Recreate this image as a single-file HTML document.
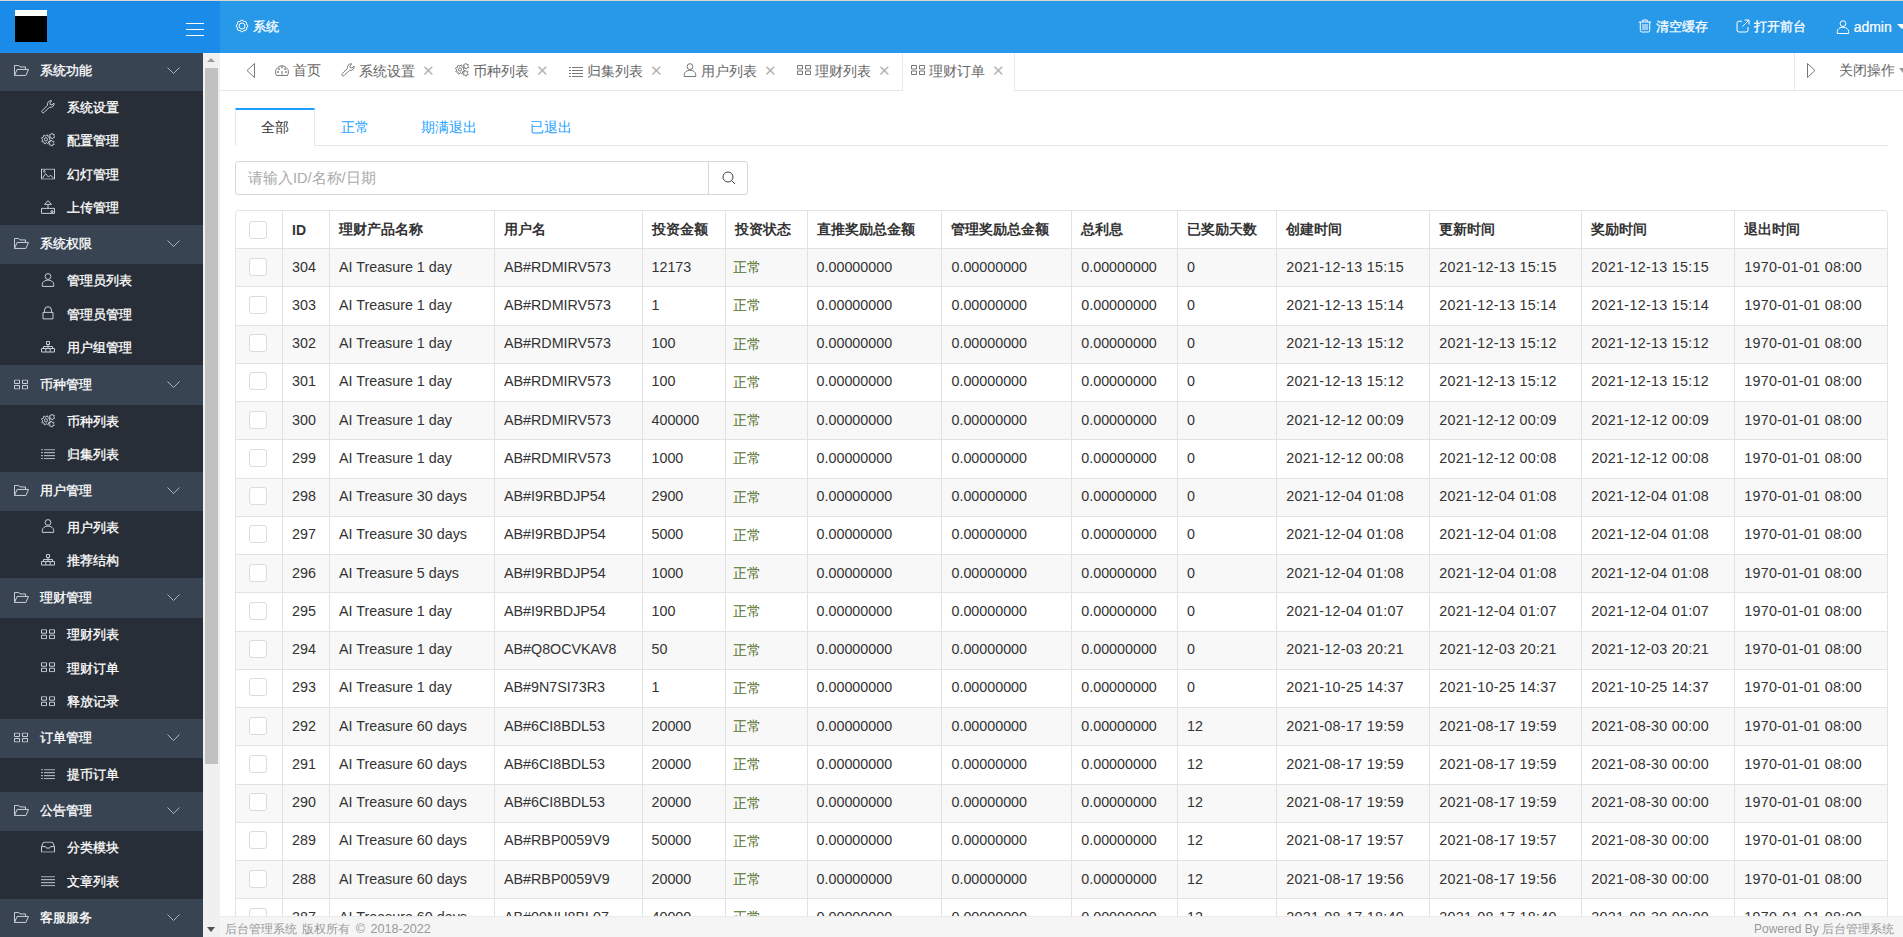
<!DOCTYPE html>
<html><head><meta charset="utf-8">
<style>
*{box-sizing:border-box;margin:0;padding:0}
html,body{width:1903px;height:937px;overflow:hidden;background:#fff;font-family:"Liberation Sans",sans-serif;color:#333}
.abs{position:absolute}
#topline{position:absolute;left:0;top:0;width:1903px;height:1px;background:#d9d6d2}
#logo{z-index:5;position:absolute;left:0;top:1px;width:220px;height:52px;background:#1a8be9}
#logo .box{position:absolute;left:15px;top:9px;width:32px;height:32px;background:#000;border-top:6px solid #fff}
#hamb{position:absolute;left:186px;top:22px;width:18px}
#hamb i{display:block;height:1px;background:#fff;margin-bottom:5px}
#hdr{z-index:5;position:absolute;left:220px;top:1px;width:1683px;height:52px;background:#2898e9;color:#fff;font-size:13px;-webkit-text-stroke:0.3px #fff}
#hdr svg{-webkit-text-stroke:0}
#hdr .t{position:absolute;top:17px;line-height:18px;white-space:nowrap}
#hdr svg{vertical-align:-2px}
#side{position:absolute;left:0;top:53px;width:203px;height:884px;background:#282e37}
.gh{position:absolute;left:0;width:203px;background:#394453;color:#fff;font-size:13px;-webkit-text-stroke:0.3px #fff}
.gh .gi{position:absolute;left:14px;top:50%;transform:translateY(-55%);color:#c9ced6;line-height:0}
.gh .gt{position:absolute;left:40px;top:50%;margin-top:-10px;line-height:20px}
.gh .gc{position:absolute;left:167px;top:50%;margin-top:-4px;color:#aeb4bd;line-height:0}
.it{position:absolute;left:0;width:203px;color:#fff;font-size:13px;-webkit-text-stroke:0.3px #fff}
.it .ii{position:absolute;left:40.8px;top:50%;transform:translateY(-58%);color:#c9ced6;line-height:0}
.it .itx{position:absolute;left:67px;top:0}
#sb{position:absolute;left:203px;top:53px;width:17px;height:884px;background:#f0f0f0}
#sb .th{position:absolute;left:2px;top:15px;width:13px;height:696px;background:#c1c1c1}
#sb .up{position:absolute;left:4px;top:4.5px;width:0;height:0;border-left:4px solid transparent;border-right:4px solid transparent;border-bottom:4.5px solid #9f9a9a}
#sb .dn{position:absolute;left:4px;top:874px;width:0;height:0;border-left:4.5px solid transparent;border-right:4.5px solid transparent;border-top:5px solid #505050}
#tabbar{position:absolute;left:220px;top:53px;width:1683px;height:38px;background:#fff;border-bottom:1px solid #e8e8e8;font-size:14px;color:#666}
.tb{position:absolute;top:0;height:36px;line-height:35px;white-space:nowrap}
.tb svg{vertical-align:-1px;color:#777}
.tb .gi2 svg{vertical-align:1px}
.tb .x{color:#b5b5b5;font-size:15px;margin-left:7px}
#content{position:absolute;left:220px;top:91px;width:1683px;height:825px;background:#fff;overflow:hidden}
#footer{position:absolute;left:220px;top:916px;width:1683px;height:21px;background:#f5f5f5;border-top:1px solid #eaeaea;color:#999;font-size:12px;line-height:20px}
table.dt{position:absolute;left:15px;top:119px;border-collapse:collapse;table-layout:fixed;width:1652px;font-size:14.3px;color:#333}
table.dt td, table.dt th{border:1px solid #e2e2e2;padding:0 0 0 9px;height:38.25px;white-space:nowrap;overflow:hidden;text-align:left}
table.dt th{font-weight:bold;height:38px;font-size:14px;padding-bottom:0}
table.dt td{padding-bottom:2px}
table.dt td.d{letter-spacing:0.3px}
table.dt tr.g td{background:#f8f8f8}
.cbx{display:inline-block;width:18px;height:18px;border:1px solid #dcdcdc;border-radius:3px;background:#fff;vertical-align:middle;margin-left:4px}
.ok{color:#53702c;position:relative;top:1.5px;left:-1.5px;font-size:14px}
</style></head><body>
<div id="topline"></div>
<div id="logo"><div class="box"></div><div id="hamb"><i></i><i></i><i></i></div></div>
<div id="hdr">
  <div class="t" style="left:15px;letter-spacing:0"><svg width="14" height="14" viewBox="0 0 14 14" fill="none" stroke="currentColor" stroke-width="1"><path d="M11.25 8.76A1.77 1.77 0 0 1 8.76 11.25A1.77 1.77 0 0 1 5.24 11.25A1.77 1.77 0 0 1 2.75 8.76A1.77 1.77 0 0 1 2.75 5.24A1.77 1.77 0 0 1 5.24 2.75A1.77 1.77 0 0 1 8.76 2.75A1.77 1.77 0 0 1 11.25 5.24A1.77 1.77 0 0 1 11.25 8.76Z"/><circle cx="7" cy="7" r="3"/></svg> 系统</div>
  <div class="t" style="left:1418px"><svg width="14" height="14" viewBox="0 0 14 14" fill="none" stroke="currentColor" stroke-width="1"><path d="M0.8 3h12.4M4.8 3V1h4.4v2M2.3 3v8.5a1.5 1.5 0 0 0 1.5 1.5h6.4a1.5 1.5 0 0 0 1.5-1.5V3M5 5v6M7 5v6M9 5v6"/></svg> 清空缓存</div>
  <div class="t" style="left:1516px"><svg width="14" height="14" viewBox="0 0 14 14" fill="none" stroke="currentColor" stroke-width="1"><path d="M6 2.2H3a2 2 0 0 0-2 2V11a2 2 0 0 0 2 2h7a2 2 0 0 0 2-2V8"/><path d="M8.5 1h4.5v4.5M13 1L6.5 7.5"/></svg> 打开前台</div>
  <div class="t" style="left:1616px"><svg width="14" height="14" viewBox="0 0 14 14" fill="none" stroke="currentColor" stroke-width="1"><circle cx="7" cy="3.6" r="2.9"/><path d="M1.3 13.5v-2c0-2.4 2.6-4.3 5.7-4.3s5.7 1.9 5.7 4.3v2z"/></svg> <span style="font-size:14px;-webkit-text-stroke:0.2px #fff">admin</span></div><div class="abs" style="left:1677px;top:23px;width:0;height:0;border-left:5px solid transparent;border-right:5px solid transparent;border-top:5px solid #fff"></div>
</div>
<div id="side">
</div>
<div id="sidewrap" style="position:absolute;left:0;top:0"><div class="gh" style="top:51.5px;height:39.5px"><span class="gi"><svg width="15" height="11" viewBox="0 0 15 11" fill="none" stroke="currentColor" stroke-width="1"><path d="M0.5 10.5V0.5h4.2l1.3 1.5h5.5v2.5"/><path d="M0.5 10.5l2.6-6h11.4l-2.6 6z"/></svg></span><span class="gt">系统功能</span><span class="gc"><svg width="13" height="7" viewBox="0 0 13 7" fill="none" stroke="currentColor" stroke-width="1"><path d="M0.5 0.5l6 6 6-6"/></svg></span></div>
<div class="it" style="top:91.00px;height:33.42px;line-height:33.42px"><span class="ii"><svg width="14" height="14" viewBox="0 0 14 14" fill="none" stroke="currentColor" stroke-width="1"><path d="M13 3.2a3.5 3.5 0 0 1-4.6 4.1L3.1 12.6a1.3 1.3 0 0 1-1.8 0l-0.1-0.1a1.3 1.3 0 0 1 0-1.8l5.3-5.3A3.5 3.5 0 0 1 10.8 1L8.9 2.9l0.3 1.8 1.8 0.3z"/></svg></span><span class="itx">系统设置</span></div>
<div class="it" style="top:124.42px;height:33.42px;line-height:33.42px"><span class="ii"><svg width="14" height="14" viewBox="0 0 14 14" fill="none" stroke="currentColor" stroke-width="1"><path d="M8.40 6.50L9.51 7.40L9.25 8.26L7.83 8.39L7.40 8.90L7.56 10.32L6.76 10.75L5.66 9.83L5.00 9.90L4.10 11.01L3.24 10.75L3.11 9.33L2.60 8.90L1.18 9.06L0.75 8.26L1.67 7.16L1.60 6.50L0.49 5.60L0.75 4.74L2.17 4.61L2.60 4.10L2.44 2.68L3.24 2.25L4.34 3.17L5.00 3.10L5.90 1.99L6.76 2.25L6.89 3.67L7.40 4.10L8.82 3.94L9.25 4.74L8.33 5.84Z"/><circle cx="5" cy="6.5" r="1.6"/><path d="M12.90 3.20L13.70 3.92L13.42 4.60L12.34 4.54L11.95 4.85L11.72 5.90L11.00 6.00L10.51 5.04L10.05 4.85L9.02 5.18L8.58 4.60L9.16 3.69L9.10 3.20L8.30 2.48L8.58 1.80L9.66 1.86L10.05 1.55L10.28 0.50L11.00 0.40L11.49 1.36L11.95 1.55L12.98 1.22L13.42 1.80L12.84 2.71Z"/><path d="M12.50 10.30L13.30 11.02L13.02 11.70L11.94 11.64L11.55 11.95L11.32 13.00L10.60 13.10L10.11 12.14L9.65 11.95L8.62 12.28L8.18 11.70L8.76 10.79L8.70 10.30L7.90 9.58L8.18 8.90L9.26 8.96L9.65 8.65L9.88 7.60L10.60 7.50L11.09 8.46L11.55 8.65L12.58 8.32L13.02 8.90L12.44 9.81Z"/></svg></span><span class="itx">配置管理</span></div>
<div class="it" style="top:157.85px;height:33.42px;line-height:33.42px"><span class="ii"><svg width="14" height="11" viewBox="0 0 14 11" fill="none" stroke="currentColor" stroke-width="1"><rect x="0.5" y="0.5" width="13" height="10"/><path d="M1.5 9.5l3-4.5 3 3.5 2-2 3 3"/><circle cx="3.3" cy="2.8" r="0.9"/></svg></span><span class="itx">幻灯管理</span></div>
<div class="it" style="top:191.27px;height:33.42px;line-height:33.42px"><span class="ii"><svg width="14" height="14" viewBox="0 0 14 14" fill="none" stroke="currentColor" stroke-width="1"><path d="M7 0.8L3.6 4.5h6.8z"/><path d="M7 4.5v4"/><path d="M0.5 8.5h13v5h-13z"/><path d="M10 11h2v1.5h-2z"/></svg></span><span class="itx">上传管理</span></div>
<div class="gh" style="top:224.7px;height:39.30000000000001px"><span class="gi"><svg width="15" height="11" viewBox="0 0 15 11" fill="none" stroke="currentColor" stroke-width="1"><path d="M0.5 10.5V0.5h4.2l1.3 1.5h5.5v2.5"/><path d="M0.5 10.5l2.6-6h11.4l-2.6 6z"/></svg></span><span class="gt">系统权限</span><span class="gc"><svg width="13" height="7" viewBox="0 0 13 7" fill="none" stroke="currentColor" stroke-width="1"><path d="M0.5 0.5l6 6 6-6"/></svg></span></div>
<div class="it" style="top:264.00px;height:33.63px;line-height:33.63px"><span class="ii"><svg width="14" height="14" viewBox="0 0 14 14" fill="none" stroke="currentColor" stroke-width="1"><circle cx="7" cy="3.6" r="2.9"/><path d="M1.3 13.5v-2c0-2.4 2.6-4.3 5.7-4.3s5.7 1.9 5.7 4.3v2z"/></svg></span><span class="itx">管理员列表</span></div>
<div class="it" style="top:297.63px;height:33.63px;line-height:33.63px"><span class="ii"><svg width="14" height="14" viewBox="0 0 14 14" fill="none" stroke="currentColor" stroke-width="1"><path d="M2 6.5h10v6.5H2z"/><path d="M3.5 6.5V4.3a3.5 3.5 0 0 1 7 0v2.2"/></svg></span><span class="itx">管理员管理</span></div>
<div class="it" style="top:331.27px;height:33.63px;line-height:33.63px"><span class="ii"><svg width="14" height="12" viewBox="0 0 14 12" fill="none" stroke="currentColor" stroke-width="1"><path d="M5.5 0.5h3v3h-3z"/><path d="M7 3.5v2M2.5 7.5v-2h9v2M7 5.5v2"/><path d="M0.5 7.5h13v3.5h-13zM4.8 7.5v3.5M9.2 7.5v3.5"/></svg></span><span class="itx">用户组管理</span></div>
<div class="gh" style="top:364.9px;height:40.0px"><span class="gi"><svg width="14" height="10" viewBox="0 0 14 10" fill="none" stroke="currentColor" stroke-width="1"><path d="M0.5 0.5h5v3.5h-5zM8.5 0.5h5v3.5h-5zM0.5 6h5v3.5h-5zM8.5 6h5v3.5h-5z"/></svg></span><span class="gt">币种管理</span><span class="gc"><svg width="13" height="7" viewBox="0 0 13 7" fill="none" stroke="currentColor" stroke-width="1"><path d="M0.5 0.5l6 6 6-6"/></svg></span></div>
<div class="it" style="top:404.90px;height:33.55px;line-height:33.55px"><span class="ii"><svg width="14" height="14" viewBox="0 0 14 14" fill="none" stroke="currentColor" stroke-width="1"><path d="M8.40 6.50L9.51 7.40L9.25 8.26L7.83 8.39L7.40 8.90L7.56 10.32L6.76 10.75L5.66 9.83L5.00 9.90L4.10 11.01L3.24 10.75L3.11 9.33L2.60 8.90L1.18 9.06L0.75 8.26L1.67 7.16L1.60 6.50L0.49 5.60L0.75 4.74L2.17 4.61L2.60 4.10L2.44 2.68L3.24 2.25L4.34 3.17L5.00 3.10L5.90 1.99L6.76 2.25L6.89 3.67L7.40 4.10L8.82 3.94L9.25 4.74L8.33 5.84Z"/><circle cx="5" cy="6.5" r="1.6"/><path d="M12.90 3.20L13.70 3.92L13.42 4.60L12.34 4.54L11.95 4.85L11.72 5.90L11.00 6.00L10.51 5.04L10.05 4.85L9.02 5.18L8.58 4.60L9.16 3.69L9.10 3.20L8.30 2.48L8.58 1.80L9.66 1.86L10.05 1.55L10.28 0.50L11.00 0.40L11.49 1.36L11.95 1.55L12.98 1.22L13.42 1.80L12.84 2.71Z"/><path d="M12.50 10.30L13.30 11.02L13.02 11.70L11.94 11.64L11.55 11.95L11.32 13.00L10.60 13.10L10.11 12.14L9.65 11.95L8.62 12.28L8.18 11.70L8.76 10.79L8.70 10.30L7.90 9.58L8.18 8.90L9.26 8.96L9.65 8.65L9.88 7.60L10.60 7.50L11.09 8.46L11.55 8.65L12.58 8.32L13.02 8.90L12.44 9.81Z"/></svg></span><span class="itx">币种列表</span></div>
<div class="it" style="top:438.45px;height:33.55px;line-height:33.55px"><span class="ii"><svg width="14" height="10" viewBox="0 0 14 10" fill="none" stroke="currentColor" stroke-width="1"><path d="M0 0.5h2M3 0.5h11M0 3.5h2M3 3.5h11M0 6.5h2M3 6.5h11M0 9.5h2M3 9.5h11"/></svg></span><span class="itx">归集列表</span></div>
<div class="gh" style="top:472px;height:38.69999999999999px"><span class="gi"><svg width="15" height="11" viewBox="0 0 15 11" fill="none" stroke="currentColor" stroke-width="1"><path d="M0.5 10.5V0.5h4.2l1.3 1.5h5.5v2.5"/><path d="M0.5 10.5l2.6-6h11.4l-2.6 6z"/></svg></span><span class="gt">用户管理</span><span class="gc"><svg width="13" height="7" viewBox="0 0 13 7" fill="none" stroke="currentColor" stroke-width="1"><path d="M0.5 0.5l6 6 6-6"/></svg></span></div>
<div class="it" style="top:510.70px;height:33.50px;line-height:33.50px"><span class="ii"><svg width="14" height="14" viewBox="0 0 14 14" fill="none" stroke="currentColor" stroke-width="1"><circle cx="7" cy="3.6" r="2.9"/><path d="M1.3 13.5v-2c0-2.4 2.6-4.3 5.7-4.3s5.7 1.9 5.7 4.3v2z"/></svg></span><span class="itx">用户列表</span></div>
<div class="it" style="top:544.20px;height:33.50px;line-height:33.50px"><span class="ii"><svg width="14" height="12" viewBox="0 0 14 12" fill="none" stroke="currentColor" stroke-width="1"><path d="M5.5 0.5h3v3h-3z"/><path d="M7 3.5v2M2.5 7.5v-2h9v2M7 5.5v2"/><path d="M0.5 7.5h13v3.5h-13zM4.8 7.5v3.5M9.2 7.5v3.5"/></svg></span><span class="itx">推荐结构</span></div>
<div class="gh" style="top:577.7px;height:40.09999999999991px"><span class="gi"><svg width="15" height="11" viewBox="0 0 15 11" fill="none" stroke="currentColor" stroke-width="1"><path d="M0.5 10.5V0.5h4.2l1.3 1.5h5.5v2.5"/><path d="M0.5 10.5l2.6-6h11.4l-2.6 6z"/></svg></span><span class="gt">理财管理</span><span class="gc"><svg width="13" height="7" viewBox="0 0 13 7" fill="none" stroke="currentColor" stroke-width="1"><path d="M0.5 0.5l6 6 6-6"/></svg></span></div>
<div class="it" style="top:617.80px;height:33.70px;line-height:33.70px"><span class="ii"><svg width="14" height="10" viewBox="0 0 14 10" fill="none" stroke="currentColor" stroke-width="1"><path d="M0.5 0.5h5v3.5h-5zM8.5 0.5h5v3.5h-5zM0.5 6h5v3.5h-5zM8.5 6h5v3.5h-5z"/></svg></span><span class="itx">理财列表</span></div>
<div class="it" style="top:651.50px;height:33.70px;line-height:33.70px"><span class="ii"><svg width="14" height="10" viewBox="0 0 14 10" fill="none" stroke="currentColor" stroke-width="1"><path d="M0.5 0.5h5v3.5h-5zM8.5 0.5h5v3.5h-5zM0.5 6h5v3.5h-5zM8.5 6h5v3.5h-5z"/></svg></span><span class="itx">理财订单</span></div>
<div class="it" style="top:685.20px;height:33.70px;line-height:33.70px"><span class="ii"><svg width="14" height="10" viewBox="0 0 14 10" fill="none" stroke="currentColor" stroke-width="1"><path d="M0.5 0.5h5v3.5h-5zM8.5 0.5h5v3.5h-5zM0.5 6h5v3.5h-5zM8.5 6h5v3.5h-5z"/></svg></span><span class="itx">释放记录</span></div>
<div class="gh" style="top:718.9px;height:38.89999999999998px"><span class="gi"><svg width="14" height="10" viewBox="0 0 14 10" fill="none" stroke="currentColor" stroke-width="1"><path d="M0.5 0.5h5v3.5h-5zM8.5 0.5h5v3.5h-5zM0.5 6h5v3.5h-5zM8.5 6h5v3.5h-5z"/></svg></span><span class="gt">订单管理</span><span class="gc"><svg width="13" height="7" viewBox="0 0 13 7" fill="none" stroke="currentColor" stroke-width="1"><path d="M0.5 0.5l6 6 6-6"/></svg></span></div>
<div class="it" style="top:757.80px;height:34.20px;line-height:34.20px"><span class="ii"><svg width="14" height="10" viewBox="0 0 14 10" fill="none" stroke="currentColor" stroke-width="1"><path d="M0 0.5h2M3 0.5h11M0 3.5h2M3 3.5h11M0 6.5h2M3 6.5h11M0 9.5h2M3 9.5h11"/></svg></span><span class="itx">提币订单</span></div>
<div class="gh" style="top:792px;height:38.89999999999998px"><span class="gi"><svg width="15" height="11" viewBox="0 0 15 11" fill="none" stroke="currentColor" stroke-width="1"><path d="M0.5 10.5V0.5h4.2l1.3 1.5h5.5v2.5"/><path d="M0.5 10.5l2.6-6h11.4l-2.6 6z"/></svg></span><span class="gt">公告管理</span><span class="gc"><svg width="13" height="7" viewBox="0 0 13 7" fill="none" stroke="currentColor" stroke-width="1"><path d="M0.5 0.5l6 6 6-6"/></svg></span></div>
<div class="it" style="top:830.90px;height:33.85px;line-height:33.85px"><span class="ii"><svg width="14" height="11" viewBox="0 0 14 11" fill="none" stroke="currentColor" stroke-width="1"><path d="M2.5 0.5h9l2 4.5v5.5H0.5V5z"/><path d="M0.5 5h4l1 1.5h3l1-1.5h4"/></svg></span><span class="itx">分类模块</span></div>
<div class="it" style="top:864.75px;height:33.85px;line-height:33.85px"><span class="ii"><svg width="14" height="10" viewBox="0 0 14 10" fill="none" stroke="currentColor" stroke-width="1"><path d="M0 0.5h14M0 3.5h14M0 6.5h14M0 9.5h14"/></svg></span><span class="itx">文章列表</span></div>
<div class="gh" style="top:898.6px;height:39.0px"><span class="gi"><svg width="15" height="11" viewBox="0 0 15 11" fill="none" stroke="currentColor" stroke-width="1"><path d="M0.5 10.5V0.5h4.2l1.3 1.5h5.5v2.5"/><path d="M0.5 10.5l2.6-6h11.4l-2.6 6z"/></svg></span><span class="gt">客服服务</span><span class="gc"><svg width="13" height="7" viewBox="0 0 13 7" fill="none" stroke="currentColor" stroke-width="1"><path d="M0.5 0.5l6 6 6-6"/></svg></span></div></div>
<div id="sb"><div class="up"></div><div class="th"></div><div class="dn"></div></div>
<div id="tabbar">
  <div class="tb" style="left:26px;top:2px;color:#888"><svg width="10" height="15" viewBox="0 0 10 15" fill="none" stroke="currentColor" stroke-width="1"><path d="M8.5 0.5L1 7.5 8.5 14.5z"/></svg></div>
  <div class="tb" style="left:55px"><svg width="14" height="12" viewBox="0 0 14 12" fill="none" stroke="currentColor" stroke-width="1"><path d="M1.6 11.5A6.3 6.3 0 1 1 12.4 11.5Z"/><path d="M7 10.5V7"/><circle cx="7" cy="3.3" r="0.6"/><circle cx="4" cy="5" r="0.6"/><circle cx="10" cy="5" r="0.6"/><circle cx="3" cy="8" r="0.6"/><circle cx="11" cy="8" r="0.6"/></svg> 首页</div>
  <div class="tb" style="left:121px"><svg width="14" height="14" viewBox="0 0 14 14" fill="none" stroke="currentColor" stroke-width="1"><path d="M13 3.2a3.5 3.5 0 0 1-4.6 4.1L3.1 12.6a1.3 1.3 0 0 1-1.8 0l-0.1-0.1a1.3 1.3 0 0 1 0-1.8l5.3-5.3A3.5 3.5 0 0 1 10.8 1L8.9 2.9l0.3 1.8 1.8 0.3z"/></svg> 系统设置<span class="x">✕</span></div>
  <div class="tb" style="left:235px"><svg width="14" height="14" viewBox="0 0 14 14" fill="none" stroke="currentColor" stroke-width="1"><path d="M8.40 6.50L9.51 7.40L9.25 8.26L7.83 8.39L7.40 8.90L7.56 10.32L6.76 10.75L5.66 9.83L5.00 9.90L4.10 11.01L3.24 10.75L3.11 9.33L2.60 8.90L1.18 9.06L0.75 8.26L1.67 7.16L1.60 6.50L0.49 5.60L0.75 4.74L2.17 4.61L2.60 4.10L2.44 2.68L3.24 2.25L4.34 3.17L5.00 3.10L5.90 1.99L6.76 2.25L6.89 3.67L7.40 4.10L8.82 3.94L9.25 4.74L8.33 5.84Z"/><circle cx="5" cy="6.5" r="1.6"/><path d="M12.90 3.20L13.70 3.92L13.42 4.60L12.34 4.54L11.95 4.85L11.72 5.90L11.00 6.00L10.51 5.04L10.05 4.85L9.02 5.18L8.58 4.60L9.16 3.69L9.10 3.20L8.30 2.48L8.58 1.80L9.66 1.86L10.05 1.55L10.28 0.50L11.00 0.40L11.49 1.36L11.95 1.55L12.98 1.22L13.42 1.80L12.84 2.71Z"/><path d="M12.50 10.30L13.30 11.02L13.02 11.70L11.94 11.64L11.55 11.95L11.32 13.00L10.60 13.10L10.11 12.14L9.65 11.95L8.62 12.28L8.18 11.70L8.76 10.79L8.70 10.30L7.90 9.58L8.18 8.90L9.26 8.96L9.65 8.65L9.88 7.60L10.60 7.50L11.09 8.46L11.55 8.65L12.58 8.32L13.02 8.90L12.44 9.81Z"/></svg> 币种列表<span class="x">✕</span></div>
  <div class="tb" style="left:349px"><svg width="14" height="10" viewBox="0 0 14 10" fill="none" stroke="currentColor" stroke-width="1"><path d="M0 0.5h2M3 0.5h11M0 3.5h2M3 3.5h11M0 6.5h2M3 6.5h11M0 9.5h2M3 9.5h11"/></svg> 归集列表<span class="x">✕</span></div>
  <div class="tb" style="left:463px"><svg width="14" height="14" viewBox="0 0 14 14" fill="none" stroke="currentColor" stroke-width="1"><circle cx="7" cy="3.6" r="2.9"/><path d="M1.3 13.5v-2c0-2.4 2.6-4.3 5.7-4.3s5.7 1.9 5.7 4.3v2z"/></svg> 用户列表<span class="x">✕</span></div>
  <div class="tb" style="left:577px"><span class=gi2><svg width="14" height="10" viewBox="0 0 14 10" fill="none" stroke="currentColor" stroke-width="1"><path d="M0.5 0.5h5v3.5h-5zM8.5 0.5h5v3.5h-5zM0.5 6h5v3.5h-5zM8.5 6h5v3.5h-5z"/></svg></span> 理财列表<span class="x">✕</span></div>
  <div class="tb" style="left:691px"><span class=gi2><svg width="14" height="10" viewBox="0 0 14 10" fill="none" stroke="currentColor" stroke-width="1"><path d="M0.5 0.5h5v3.5h-5zM8.5 0.5h5v3.5h-5zM0.5 6h5v3.5h-5zM8.5 6h5v3.5h-5z"/></svg></span> 理财订单<span class="x">✕</span></div>
  <div class="abs" style="left:682px;top:0;width:113px;height:38px;border-left:1px solid #e8e8e8;border-right:1px solid #e8e8e8;background:#fff"></div>
  <div class="tb" style="left:691px"><span class=gi2><svg width="14" height="10" viewBox="0 0 14 10" fill="none" stroke="currentColor" stroke-width="1"><path d="M0.5 0.5h5v3.5h-5zM8.5 0.5h5v3.5h-5zM0.5 6h5v3.5h-5zM8.5 6h5v3.5h-5z"/></svg></span> 理财订单<span class="x">✕</span></div>
  <div class="abs" style="left:1574px;top:0;width:1px;height:37px;background:#e8e8e8"></div>
  <div class="tb" style="left:1586px;top:2px;color:#888"><svg width="10" height="15" viewBox="0 0 10 15" fill="none" stroke="currentColor" stroke-width="1"><path d="M1.5 0.5L9 7.5 1.5 14.5z"/></svg></div>
  <div class="tb" style="left:1619px">关闭操作 <span style="display:inline-block;border-left:4px solid transparent;border-right:4px solid transparent;border-top:5px solid #999;vertical-align:2px"></span></div>
</div>
<div id="content">
  <div class="abs" style="left:15px;top:54px;width:1653px;height:1px;background:#e6e6e6"></div>
  <div class="abs" style="left:15px;top:17px;width:80px;height:38px;border:1px solid #e6e6e6;border-top:2px solid #1e9fff;border-bottom:none;background:#fff;text-align:center;line-height:35px;font-size:14px;color:#333">全部</div>
  <div class="abs" style="left:121px;top:18px;line-height:36px;font-size:14px;color:#1e9fff">正常</div>
  <div class="abs" style="left:201px;top:18px;line-height:36px;font-size:14px;color:#1e9fff">期满退出</div>
  <div class="abs" style="left:310px;top:18px;line-height:36px;font-size:14px;color:#1e9fff">已退出</div>
  <div class="abs" style="left:15px;top:70px;width:513px;height:34px;border:1px solid #d6d6d6;border-radius:3px"></div>
  <div class="abs" style="left:488px;top:70px;width:1px;height:34px;background:#d6d6d6"></div>
  <div class="abs" style="left:28px;top:78px;line-height:18px;font-size:14.5px;color:#aaa">请输入ID/名称/日期</div>
  <div class="abs" style="left:501.5px;top:80px;line-height:0"><svg width="15" height="15" viewBox="0 0 15 15" fill="none" stroke="#444" stroke-width="1"><circle cx="6" cy="6" r="5"/><path d="M9.6 9.6l3.4 3.4"/></svg></div>
  <table class="dt"><colgroup><col style="width:47.0px"><col style="width:47.0px"><col style="width:165.0px"><col style="width:147.5px"><col style="width:83.0px"><col style="width:82.1px"><col style="width:134.9px"><col style="width:129.8px"><col style="width:105.7px"><col style="width:99.3px"><col style="width:152.9px"><col style="width:152.2px"><col style="width:152.9px"><col style="width:152.7px"></colgroup><tr class="hr"><th><i class=cbx></i></th><th>ID</th><th>理财产品名称</th><th>用户名</th><th>投资金额</th><th>投资状态</th><th>直推奖励总金额</th><th>管理奖励总金额</th><th>总利息</th><th>已奖励天数</th><th>创建时间</th><th>更新时间</th><th>奖励时间</th><th>退出时间</th></tr><tr class="g"><td><i class="cbx"></i></td><td>304</td><td>AI Treasure 1 day</td><td>AB#RDMIRV573</td><td>12173</td><td><span class="ok">正常</span></td><td>0.00000000</td><td>0.00000000</td><td>0.00000000</td><td>0</td><td class=d>2021-12-13 15:15</td><td class=d>2021-12-13 15:15</td><td class=d>2021-12-13 15:15</td><td class=d>1970-01-01 08:00</td></tr><tr class="w"><td><i class="cbx"></i></td><td>303</td><td>AI Treasure 1 day</td><td>AB#RDMIRV573</td><td>1</td><td><span class="ok">正常</span></td><td>0.00000000</td><td>0.00000000</td><td>0.00000000</td><td>0</td><td class=d>2021-12-13 15:14</td><td class=d>2021-12-13 15:14</td><td class=d>2021-12-13 15:14</td><td class=d>1970-01-01 08:00</td></tr><tr class="g"><td><i class="cbx"></i></td><td>302</td><td>AI Treasure 1 day</td><td>AB#RDMIRV573</td><td>100</td><td><span class="ok">正常</span></td><td>0.00000000</td><td>0.00000000</td><td>0.00000000</td><td>0</td><td class=d>2021-12-13 15:12</td><td class=d>2021-12-13 15:12</td><td class=d>2021-12-13 15:12</td><td class=d>1970-01-01 08:00</td></tr><tr class="w"><td><i class="cbx"></i></td><td>301</td><td>AI Treasure 1 day</td><td>AB#RDMIRV573</td><td>100</td><td><span class="ok">正常</span></td><td>0.00000000</td><td>0.00000000</td><td>0.00000000</td><td>0</td><td class=d>2021-12-13 15:12</td><td class=d>2021-12-13 15:12</td><td class=d>2021-12-13 15:12</td><td class=d>1970-01-01 08:00</td></tr><tr class="g"><td><i class="cbx"></i></td><td>300</td><td>AI Treasure 1 day</td><td>AB#RDMIRV573</td><td>400000</td><td><span class="ok">正常</span></td><td>0.00000000</td><td>0.00000000</td><td>0.00000000</td><td>0</td><td class=d>2021-12-12 00:09</td><td class=d>2021-12-12 00:09</td><td class=d>2021-12-12 00:09</td><td class=d>1970-01-01 08:00</td></tr><tr class="w"><td><i class="cbx"></i></td><td>299</td><td>AI Treasure 1 day</td><td>AB#RDMIRV573</td><td>1000</td><td><span class="ok">正常</span></td><td>0.00000000</td><td>0.00000000</td><td>0.00000000</td><td>0</td><td class=d>2021-12-12 00:08</td><td class=d>2021-12-12 00:08</td><td class=d>2021-12-12 00:08</td><td class=d>1970-01-01 08:00</td></tr><tr class="g"><td><i class="cbx"></i></td><td>298</td><td>AI Treasure 30 days</td><td>AB#I9RBDJP54</td><td>2900</td><td><span class="ok">正常</span></td><td>0.00000000</td><td>0.00000000</td><td>0.00000000</td><td>0</td><td class=d>2021-12-04 01:08</td><td class=d>2021-12-04 01:08</td><td class=d>2021-12-04 01:08</td><td class=d>1970-01-01 08:00</td></tr><tr class="w"><td><i class="cbx"></i></td><td>297</td><td>AI Treasure 30 days</td><td>AB#I9RBDJP54</td><td>5000</td><td><span class="ok">正常</span></td><td>0.00000000</td><td>0.00000000</td><td>0.00000000</td><td>0</td><td class=d>2021-12-04 01:08</td><td class=d>2021-12-04 01:08</td><td class=d>2021-12-04 01:08</td><td class=d>1970-01-01 08:00</td></tr><tr class="g"><td><i class="cbx"></i></td><td>296</td><td>AI Treasure 5 days</td><td>AB#I9RBDJP54</td><td>1000</td><td><span class="ok">正常</span></td><td>0.00000000</td><td>0.00000000</td><td>0.00000000</td><td>0</td><td class=d>2021-12-04 01:08</td><td class=d>2021-12-04 01:08</td><td class=d>2021-12-04 01:08</td><td class=d>1970-01-01 08:00</td></tr><tr class="w"><td><i class="cbx"></i></td><td>295</td><td>AI Treasure 1 day</td><td>AB#I9RBDJP54</td><td>100</td><td><span class="ok">正常</span></td><td>0.00000000</td><td>0.00000000</td><td>0.00000000</td><td>0</td><td class=d>2021-12-04 01:07</td><td class=d>2021-12-04 01:07</td><td class=d>2021-12-04 01:07</td><td class=d>1970-01-01 08:00</td></tr><tr class="g"><td><i class="cbx"></i></td><td>294</td><td>AI Treasure 1 day</td><td>AB#Q8OCVKAV8</td><td>50</td><td><span class="ok">正常</span></td><td>0.00000000</td><td>0.00000000</td><td>0.00000000</td><td>0</td><td class=d>2021-12-03 20:21</td><td class=d>2021-12-03 20:21</td><td class=d>2021-12-03 20:21</td><td class=d>1970-01-01 08:00</td></tr><tr class="w"><td><i class="cbx"></i></td><td>293</td><td>AI Treasure 1 day</td><td>AB#9N7SI73R3</td><td>1</td><td><span class="ok">正常</span></td><td>0.00000000</td><td>0.00000000</td><td>0.00000000</td><td>0</td><td class=d>2021-10-25 14:37</td><td class=d>2021-10-25 14:37</td><td class=d>2021-10-25 14:37</td><td class=d>1970-01-01 08:00</td></tr><tr class="g"><td><i class="cbx"></i></td><td>292</td><td>AI Treasure 60 days</td><td>AB#6CI8BDL53</td><td>20000</td><td><span class="ok">正常</span></td><td>0.00000000</td><td>0.00000000</td><td>0.00000000</td><td>12</td><td class=d>2021-08-17 19:59</td><td class=d>2021-08-17 19:59</td><td class=d>2021-08-30 00:00</td><td class=d>1970-01-01 08:00</td></tr><tr class="w"><td><i class="cbx"></i></td><td>291</td><td>AI Treasure 60 days</td><td>AB#6CI8BDL53</td><td>20000</td><td><span class="ok">正常</span></td><td>0.00000000</td><td>0.00000000</td><td>0.00000000</td><td>12</td><td class=d>2021-08-17 19:59</td><td class=d>2021-08-17 19:59</td><td class=d>2021-08-30 00:00</td><td class=d>1970-01-01 08:00</td></tr><tr class="g"><td><i class="cbx"></i></td><td>290</td><td>AI Treasure 60 days</td><td>AB#6CI8BDL53</td><td>20000</td><td><span class="ok">正常</span></td><td>0.00000000</td><td>0.00000000</td><td>0.00000000</td><td>12</td><td class=d>2021-08-17 19:59</td><td class=d>2021-08-17 19:59</td><td class=d>2021-08-30 00:00</td><td class=d>1970-01-01 08:00</td></tr><tr class="w"><td><i class="cbx"></i></td><td>289</td><td>AI Treasure 60 days</td><td>AB#RBP0059V9</td><td>50000</td><td><span class="ok">正常</span></td><td>0.00000000</td><td>0.00000000</td><td>0.00000000</td><td>12</td><td class=d>2021-08-17 19:57</td><td class=d>2021-08-17 19:57</td><td class=d>2021-08-30 00:00</td><td class=d>1970-01-01 08:00</td></tr><tr class="g"><td><i class="cbx"></i></td><td>288</td><td>AI Treasure 60 days</td><td>AB#RBP0059V9</td><td>20000</td><td><span class="ok">正常</span></td><td>0.00000000</td><td>0.00000000</td><td>0.00000000</td><td>12</td><td class=d>2021-08-17 19:56</td><td class=d>2021-08-17 19:56</td><td class=d>2021-08-30 00:00</td><td class=d>1970-01-01 08:00</td></tr><tr class="w"><td><i class="cbx"></i></td><td>287</td><td>AI Treasure 60 days</td><td>AB#09NU8BL07</td><td>40000</td><td><span class="ok">正常</span></td><td>0.00000000</td><td>0.00000000</td><td>0.00000000</td><td>12</td><td class=d>2021-08-17 18:40</td><td class=d>2021-08-17 18:40</td><td class=d>2021-08-30 00:00</td><td class=d>1970-01-01 08:00</td></tr></table>
  <svg class="abs" style="left:15px;top:119px" width="5" height="5" viewBox="0 0 5 5"><path d="M0 0H4V0.5H3.5A3 3 0 0 0 0.5 3.5V4H0Z" fill="#fff"/><path d="M0.5 5V3.5A3 3 0 0 1 3.5 0.5H5" fill="none" stroke="#e2e2e2"/></svg>
  <svg class="abs" style="left:1663px;top:119px" width="5" height="5" viewBox="0 0 5 5"><path d="M5 0H1V0.5H1.5A3 3 0 0 1 4.5 3.5V4H5Z" fill="#fff"/><path d="M4.5 5V3.5A3 3 0 0 0 1.5 0.5H0" fill="none" stroke="#e2e2e2"/></svg>
</div>
<div id="footer"><span style="position:absolute;left:5px;top:2px;word-spacing:2px">后台管理系统 版权所有 <span style="font-size:12.6px">© 2018-2022</span></span><span style="position:absolute;right:9px;top:2px">Powered By 后台管理系统</span></div>
</body></html>
